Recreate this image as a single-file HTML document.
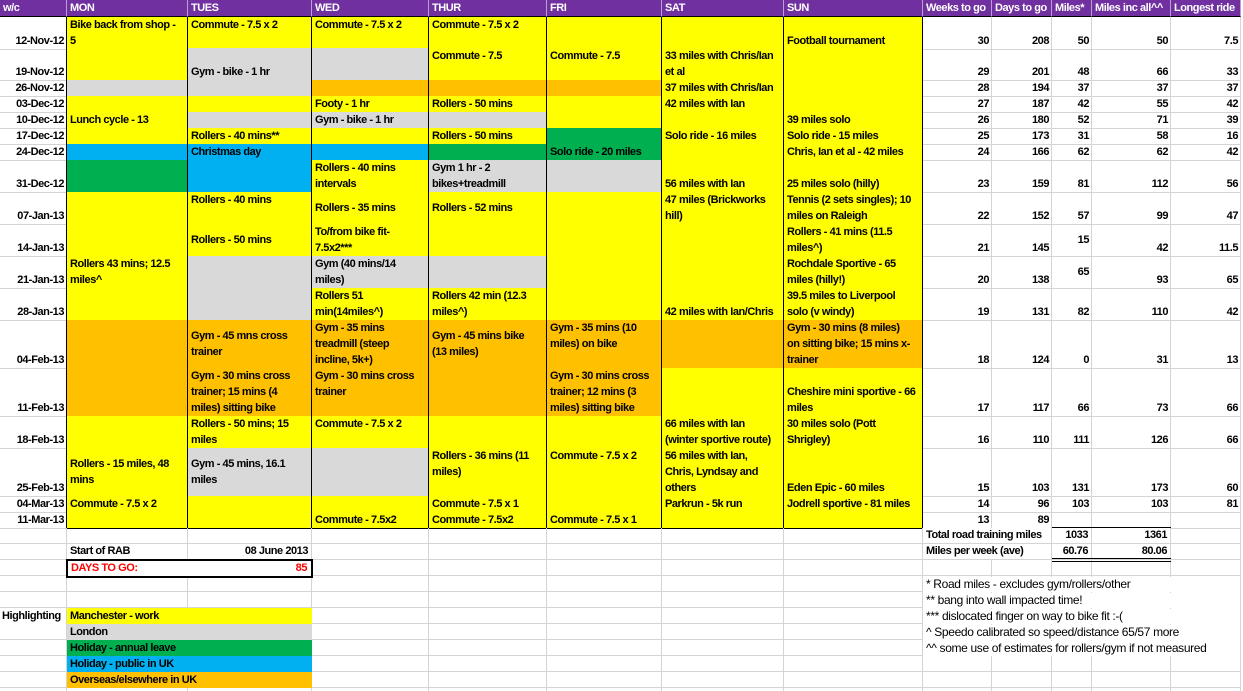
<!DOCTYPE html>
<html><head><meta charset="utf-8"><style>
*{margin:0;padding:0;box-sizing:border-box}
body{width:1243px;height:691px;background:#fff;position:relative;overflow:hidden;font-family:"Liberation Sans",sans-serif;font-size:11px;letter-spacing:-0.45px;font-weight:bold;color:#000}
.r{position:absolute;left:0;width:1241px;display:grid;grid-template-columns:67px 121px 124px 117px 118px 115px 122px 139px 69px 60px 40px 79px 70px}
.r>div{border-right:1px solid #d4d4d4;border-bottom:1px solid #d4d4d4;display:flex;flex-direction:column;justify-content:flex-end;padding:0 3px;line-height:16px;white-space:nowrap}
.r>div.a{border-right-color:#000;align-items:flex-end;padding-right:2px}
.r>div.n{align-items:flex-end;padding-right:2px}
.r>.y{background:#ff0;border-color:#000}
.r>.g{background:#d9d9d9;border-color:#000}
.r>.o{background:#ffc000;border-color:#000}
.r>.gr{background:#00b050;border-color:#000}
.r>.bl{background:#00b0f0;border-color:#000}
.r>div.t{justify-content:flex-start}
.r>div.m{justify-content:center}
.h{background:#7030a0;color:#fff}
.h>div{border-right-color:#b9a0d4!important;border-bottom-color:#000!important;justify-content:center!important}
.vl{position:absolute;top:528px;height:163px;width:1px;background:#d4d4d4}
.hl{position:absolute;left:0;width:1241px;top:528px;height:163px;background:repeating-linear-gradient(to bottom,transparent 0 15px,#d4d4d4 15px 16px)}
.x{position:absolute;line-height:15px;height:15px;white-space:nowrap;padding:0 3px;background:#fff}
.fn{font-weight:normal;font-size:12px;letter-spacing:-0.35px}
</style></head><body>
<div class="r h" style="top:0;height:17px">
<div>w/c</div><div>MON</div><div>TUES</div><div>WED</div><div>THUR</div><div>FRI</div><div>SAT</div><div>SUN</div><div>Weeks to go</div><div>Days to go</div><div>Miles*</div><div>Miles inc all^^</div><div>Longest ride</div>
</div>

<div class="r" style="top:17px;height:31px">
<div class="a">12-Nov-12</div><div class="y t">Bike back from shop -<br>5</div><div class="y t">Commute - 7.5 x 2</div><div class="y t">Commute - 7.5 x 2</div><div class="y t">Commute - 7.5 x 2</div><div class="y"></div><div class="y"></div><div class="y">Football tournament</div><div class="n">30</div><div class="n">208</div><div class="n">50</div><div class="n">50</div><div class="n">7.5</div>
</div>
<div class="r" style="top:48px;height:32px">
<div class="a">19-Nov-12</div><div class="y"></div><div class="g">Gym - bike - 1 hr</div><div class="g"></div><div class="y t">Commute - 7.5</div><div class="y t">Commute - 7.5</div><div class="y">33 miles with Chris/Ian<br>et al</div><div class="y"></div><div class="n">29</div><div class="n">201</div><div class="n">48</div><div class="n">66</div><div class="n">33</div>
</div>
<div class="r" style="top:80px;height:16px">
<div class="a">26-Nov-12</div><div class="g"></div><div class="g"></div><div class="o"></div><div class="o"></div><div class="o"></div><div class="y">37 miles with Chris/Ian</div><div class="y"></div><div class="n">28</div><div class="n">194</div><div class="n">37</div><div class="n">37</div><div class="n">37</div>
</div>
<div class="r" style="top:96px;height:16px">
<div class="a">03-Dec-12</div><div class="y"></div><div class="y"></div><div class="y">Footy - 1 hr</div><div class="y">Rollers - 50 mins</div><div class="y"></div><div class="y">42 miles with Ian</div><div class="y"></div><div class="n">27</div><div class="n">187</div><div class="n">42</div><div class="n">55</div><div class="n">42</div>
</div>
<div class="r" style="top:112px;height:16px">
<div class="a">10-Dec-12</div><div class="y">Lunch cycle - 13</div><div class="g"></div><div class="g">Gym - bike - 1 hr</div><div class="g"></div><div class="y"></div><div class="y"></div><div class="y">39 miles solo</div><div class="n">26</div><div class="n">180</div><div class="n">52</div><div class="n">71</div><div class="n">39</div>
</div>
<div class="r" style="top:128px;height:16px">
<div class="a">17-Dec-12</div><div class="y"></div><div class="y">Rollers - 40 mins**</div><div class="y"></div><div class="y">Rollers - 50 mins</div><div class="gr"></div><div class="y">Solo ride - 16 miles</div><div class="y">Solo ride - 15 miles</div><div class="n">25</div><div class="n">173</div><div class="n">31</div><div class="n">58</div><div class="n">16</div>
</div>
<div class="r" style="top:144px;height:16px">
<div class="a">24-Dec-12</div><div class="bl"></div><div class="bl">Christmas day</div><div class="bl"></div><div class="gr"></div><div class="gr">Solo ride - 20 miles</div><div class="y"></div><div class="y">Chris, Ian et al - 42 miles</div><div class="n">24</div><div class="n">166</div><div class="n">62</div><div class="n">62</div><div class="n">42</div>
</div>
<div class="r" style="top:160px;height:32px">
<div class="a">31-Dec-12</div><div class="gr"></div><div class="bl"></div><div class="y">Rollers - 40 mins<br>intervals</div><div class="g">Gym 1 hr - 2<br>bikes+treadmill</div><div class="g"></div><div class="y">56 miles with Ian</div><div class="y">25 miles solo (hilly)</div><div class="n">23</div><div class="n">159</div><div class="n">81</div><div class="n">112</div><div class="n">56</div>
</div>
<div class="r" style="top:192px;height:32px">
<div class="a">07-Jan-13</div><div class="y"></div><div class="y t">Rollers - 40 mins</div><div class="y m">Rollers - 35 mins</div><div class="y m">Rollers - 52 mins</div><div class="y"></div><div class="y">47 miles (Brickworks<br>hill)</div><div class="y">Tennis (2 sets singles); 10<br>miles on Raleigh</div><div class="n">22</div><div class="n">152</div><div class="n">57</div><div class="n">99</div><div class="n">47</div>
</div>
<div class="r" style="top:224px;height:32px">
<div class="a">14-Jan-13</div><div class="y"></div><div class="y m">Rollers - 50 mins</div><div class="y">To/from bike fit-<br>7.5x2***</div><div class="y"></div><div class="y"></div><div class="y"></div><div class="y">Rollers - 41 mins (11.5<br>miles^)</div><div class="n">21</div><div class="n">145</div><div class="n m">15</div><div class="n">42</div><div class="n">11.5</div>
</div>
<div class="r" style="top:256px;height:32px">
<div class="a">21-Jan-13</div><div class="y">Rollers 43 mins; 12.5<br>miles^</div><div class="g"></div><div class="g">Gym (40 mins/14<br>miles)</div><div class="g"></div><div class="y"></div><div class="y"></div><div class="y">Rochdale Sportive - 65<br>miles (hilly!)</div><div class="n">20</div><div class="n">138</div><div class="n m">65</div><div class="n">93</div><div class="n">65</div>
</div>
<div class="r" style="top:288px;height:32px">
<div class="a">28-Jan-13</div><div class="y"></div><div class="g"></div><div class="y">Rollers 51<br>min(14miles^)</div><div class="y">Rollers 42 min (12.3<br>miles^)</div><div class="y"></div><div class="y">42 miles with Ian/Chris</div><div class="y">39.5 miles to Liverpool<br>solo (v windy)</div><div class="n">19</div><div class="n">131</div><div class="n">82</div><div class="n">110</div><div class="n">42</div>
</div>
<div class="r" style="top:320px;height:48px">
<div class="a">04-Feb-13</div><div class="o"></div><div class="o m">Gym - 45 mns cross<br>trainer</div><div class="o">Gym - 35 mins<br>treadmill (steep<br>incline, 5k+)</div><div class="o m">Gym - 45 mins bike<br>(13 miles)</div><div class="o t">Gym - 35 mins (10<br>miles) on bike</div><div class="o"></div><div class="o">Gym - 30 mins (8 miles)<br>on sitting bike; 15 mins x-<br>trainer</div><div class="n">18</div><div class="n">124</div><div class="n">0</div><div class="n">31</div><div class="n">13</div>
</div>
<div class="r" style="top:368px;height:48px">
<div class="a">11-Feb-13</div><div class="o"></div><div class="o">Gym - 30 mins cross<br>trainer; 15 mins (4<br>miles) sitting bike</div><div class="o t">Gym - 30 mins cross<br>trainer</div><div class="o"></div><div class="o">Gym - 30 mins cross<br>trainer; 12 mins (3<br>miles) sitting bike</div><div class="y"></div><div class="y">Cheshire mini sportive - 66<br>miles</div><div class="n">17</div><div class="n">117</div><div class="n">66</div><div class="n">73</div><div class="n">66</div>
</div>
<div class="r" style="top:416px;height:32px">
<div class="a">18-Feb-13</div><div class="y"></div><div class="y">Rollers - 50 mins; 15<br>miles</div><div class="y t">Commute - 7.5 x 2</div><div class="y"></div><div class="y"></div><div class="y">66 miles with Ian<br>(winter sportive route)</div><div class="y">30 miles solo (Pott<br>Shrigley)</div><div class="n">16</div><div class="n">110</div><div class="n">111</div><div class="n">126</div><div class="n">66</div>
</div>
<div class="r" style="top:448px;height:48px">
<div class="a">25-Feb-13</div><div class="y m">Rollers - 15 miles, 48<br>mins</div><div class="g m">Gym - 45 mins, 16.1<br>miles</div><div class="g"></div><div class="y t">Rollers - 36 mins (11<br>miles)</div><div class="y t">Commute - 7.5 x 2</div><div class="y">56 miles with Ian,<br>Chris, Lyndsay and<br>others</div><div class="y">Eden Epic - 60 miles</div><div class="n">15</div><div class="n">103</div><div class="n">131</div><div class="n">173</div><div class="n">60</div>
</div>
<div class="r" style="top:496px;height:16px">
<div class="a">04-Mar-13</div><div class="y">Commute - 7.5 x 2</div><div class="y"></div><div class="y"></div><div class="y">Commute - 7.5 x 1</div><div class="y"></div><div class="y">Parkrun - 5k run</div><div class="y">Jodrell sportive - 81 miles</div><div class="n">14</div><div class="n">96</div><div class="n">103</div><div class="n">103</div><div class="n">81</div>
</div>
<div class="r" style="top:512px;height:16px">
<div class="a">11-Mar-13</div><div class="y"></div><div class="y"></div><div class="y">Commute - 7.5x2</div><div class="y">Commute - 7.5x2</div><div class="y">Commute - 7.5 x 1</div><div class="y"></div><div class="y"></div><div class="n">13</div><div class="n">89</div><div class="n"></div><div class="n"></div><div class="n"></div>
</div>

<div class="hl"></div>
<div class="vl" style="left:66px"></div><div class="vl" style="left:187px"></div><div class="vl" style="left:311px"></div><div class="vl" style="left:428px"></div><div class="vl" style="left:546px"></div><div class="vl" style="left:661px"></div><div class="vl" style="left:783px"></div><div class="vl" style="left:922px"></div><div class="vl" style="left:991px"></div><div class="vl" style="left:1051px"></div><div class="vl" style="left:1091px"></div><div class="vl" style="left:1170px"></div><div class="vl" style="left:1240px"></div>

<div class="x" style="left:923px;top:528px;width:128px">Total road training miles</div>
<div style="position:absolute;left:1052px;top:527px;width:119px;height:1px;background:#000"></div>
<div class="x" style="left:1052px;top:528px;width:39px;text-align:right">1033</div>
<div class="x" style="left:1092px;top:528px;width:78px;text-align:right">1361</div>
<div class="x" style="left:923px;top:544px;width:128px">Miles per week (ave)</div>
<div class="x" style="left:1052px;top:544px;width:39px;text-align:right">60.76</div>
<div class="x" style="left:1092px;top:544px;width:78px;text-align:right">80.06</div>
<div style="position:absolute;left:1052px;top:558px;width:119px;height:4px;border-top:1px solid #000;border-bottom:1px solid #000"></div>

<div class="x" style="left:67px;top:544px;width:120px">Start of RAB</div>
<div class="x" style="left:188px;top:544px;width:123px;text-align:right">08 June 2013</div>
<div style="position:absolute;left:66px;top:559px;width:247px;height:19px;border:2px solid #000;background:#fff"></div>
<div class="x" style="left:68px;top:561px;width:120px;color:#f00;background:none">DAYS TO GO:</div>
<div class="x" style="left:190px;top:561px;width:120px;color:#f00;text-align:right;background:none">85</div>

<div class="x fn" style="left:923px;top:577px;width:317px">* Road miles - excludes gym/rollers/other</div>
<div class="x fn" style="left:923px;top:593px;width:317px">** bang into wall impacted time!</div>
<div class="x fn" style="left:923px;top:609px;width:317px">*** dislocated finger on way to bike fit :-(</div>
<div class="x fn" style="left:923px;top:625px;width:317px">^ Speedo calibrated so speed/distance 65/57 more</div>
<div class="x fn" style="left:923px;top:641px;width:317px">^^ some use of estimates for rollers/gym if not measured</div>

<div class="x" style="left:0;top:609px;width:66px;padding:0 2px">Highlighting</div>
<div class="x" style="left:67px;top:608px;width:245px;height:16px;line-height:16px;background:#ff0">Manchester - work</div>
<div class="x" style="left:67px;top:624px;width:245px;height:16px;line-height:16px;background:#d9d9d9">London</div>
<div class="x" style="left:67px;top:640px;width:245px;height:16px;line-height:16px;background:#00b050">Holiday - annual leave</div>
<div class="x" style="left:67px;top:656px;width:245px;height:16px;line-height:16px;background:#00b0f0">Holiday - public in UK</div>
<div class="x" style="left:67px;top:672px;width:245px;height:16px;line-height:16px;background:#ffc000">Overseas/elsewhere in UK</div>
</body></html>
